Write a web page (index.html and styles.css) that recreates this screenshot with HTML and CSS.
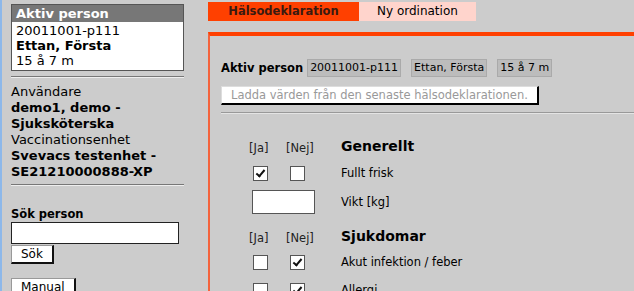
FILE: index.html
```html
<!DOCTYPE html>
<html lang="sv">
<head>
  <meta charset="UTF-8">
  <title>Hälsodeklaration</title>
  <link rel="stylesheet" href="styles.css">
</head>
<body>
  <div class="page">
    <!-- Sidebar -->
    <div class="sidebar">
      <div class="person-box">
        <div class="person-head">Aktiv person</div>
        <div class="person-body">
          <div>20011001-p111</div>
          <div class="bold">Ettan, Första</div>
          <div>15 å 7 m</div>
        </div>
      </div>
      <hr class="sep">
      <div class="user-info">
        <div>Användare</div>
        <div class="bold">demo1, demo -<br>Sjuksköterska</div>
        <div>Vaccinationsenhet</div>
        <div class="bold">Svevacs testenhet -<br>SE21210000888-XP</div>
      </div>
      <hr class="sep sep2">
      <div class="search">
        <div class="search-title">Sök person</div>
        <input type="text" class="search-input">
        <button class="btn">Sök</button>
      </div>
      <button class="btn manual">Manual</button>
    </div>

    <!-- Main -->
    <div class="main">
      <div class="tabs">
        <div class="tab active">Hälsodeklaration</div>
        <div class="tab">Ny ordination</div>
      </div>
      <div class="panel">
        <div class="active-row">
          <span class="bold">Aktiv person</span>
          <span class="field">20011001-p111</span>
          <span class="field">Ettan, Första</span>
          <span class="field">15 å 7 m</span>
        </div>
        <button class="load-btn">Ladda värden från den senaste hälsodeklarationen.</button>
        <hr class="panel-sep">

        <div class="qgrid">
          <div class="col-head">[Ja]</div>
          <div class="col-head">[Nej]</div>
          <div class="section">Generellt</div>

          <div class="cell"><span class="cb checked"></span></div>
          <div class="cell"><span class="cb"></span></div>
          <div class="label">Fullt frisk</div>

          <div class="cell wide"><span class="num-input"></span></div>
          <div class="label">Vikt [kg]</div>

          <div class="col-head">[Ja]</div>
          <div class="col-head">[Nej]</div>
          <div class="section">Sjukdomar</div>

          <div class="cell"><span class="cb"></span></div>
          <div class="cell"><span class="cb checked"></span></div>
          <div class="label">Akut infektion / feber</div>

          <div class="cell"><span class="cb"></span></div>
          <div class="cell"><span class="cb checked"></span></div>
          <div class="label">Allergi</div>
        </div>
      </div>
    </div>
  </div>
</body>
</html>
```
FILE: styles.css
```css
body {
  margin: 0;
  background-color: #cccccc;
  font-family: "DejaVu Sans", Verdana, sans-serif;
  font-size: 12px;
  color: #000;
  height: 291px;
  overflow: hidden;
}
.page {
  display: flex;
  border-left: 2px solid #8db8ea;
  height: 291px;
  overflow: hidden;
}
.bold {
  font-weight: bold;
}

/* Sidebar */
.sidebar {
  width: 173px;
  padding: 4px 0 0 9px;
  flex-shrink: 0;
}
.person-box {
  border: 1px solid #555;
  background: #fff;
}
.person-head {
  background: #777;
  color: #fff;
  font-weight: bold;
  font-size: 13px;
  padding: 0 4px;
  height: 17px;
  line-height: 17px;
}
.person-body {
  padding: 1px 4px 2px;
  line-height: 15px;
  font-size: 13px;
}
.sep {
  border: none;
  border-top: 1px solid #777;
  border-bottom: 1px solid #eee;
  margin: 5px 0 6px;
}
.sep2 {
  margin-top: 4px;
}
.user-info {
  line-height: 16px;
  font-size: 13px;
}
.search {
  margin-top: 20px;
}
.search-title {
  font-weight: bold;
  font-size: 11.5px;
  line-height: 16px;
}
.search-input {
  display: block;
  width: 168px;
  height: 22px;
  box-sizing: border-box;
  border: 1px solid #222;
  margin: 0;
  padding: 0;
}
.btn {
  display: block;
  background: #fff;
  border: 1px solid #999;
  border-right-color: #111;
  border-bottom-color: #111;
  border-width: 1px 2px 2px 1px;
  font-family: inherit;
  font-size: 12px;
  padding: 0 9px;
  height: 19px;
  margin: 1px 0 0;
}
.manual {
  margin-top: 14px;
}

/* Main */
.main {
  flex: 1;
  margin-left: 24px;
}
.tabs {
  display: flex;
  margin-top: 2px;
  height: 19px;
}
.tab {
  background: #ffd4cc;
  padding: 0 18px;
  line-height: 19px;
  font-size: 12px;
}
.tab.active {
  background: #ff4000;
  font-weight: bold;
  font-size: 11.5px;
  width: 151px;
  box-sizing: border-box;
  text-align: center;
  padding: 0;
  color: #3a1a10;
}
.panel {
  margin-top: 11px;
  border-top: 4px solid #ff4000;
  border-left: 2px solid #f4633c;
  padding: 23px 0 0 11px;
  height: 300px;
}
.active-row {
  display: flex;
  align-items: center;
  gap: 10px;
  height: 18px;
}
.active-row .bold {
  margin-right: -6px;
  font-size: 11.5px;
}
.field {
  background: #bcbcbc;
  border: 1px solid #aaa;
  padding: 0 2px;
  font-size: 11px;
  height: 16px;
  line-height: 16px;
}
.load-btn {
  display: block;
  margin-top: 9px;
  background: #fff;
  color: #999;
  border: 1px solid #ddd;
  border-right: 2px solid #000;
  border-bottom: 2px solid #000;
  font-family: inherit;
  font-size: 11.5px;
  height: 19px;
  padding: 0 9px;
}
.panel-sep {
  border: none;
  border-top: 1px solid #999;
  border-bottom: 1px solid #e4e4e4;
  margin: 7px 0 0;
}
.qgrid {
  display: grid;
  grid-template-columns: 37px 52px 1fr;
  grid-template-rows: 22px 30px 27px 33px 28px 28px;
  margin: 22px 0 0 31px;
  align-items: center;
}
.col-head {
  font-size: 11.5px;
  color: #222;
  height: 20px;
  line-height: 20px;
  align-self: end;
  margin-left: -3px;
}
.section {
  font-weight: bold;
  font-size: 14px;
  height: 20px;
  line-height: 16px;
  align-self: end;
}
.cell {
  display: flex;
  align-items: center;
}
.cell.wide {
  grid-column: 1 / 3;
}
.label {
  font-size: 11.5px;
}
.cb {
  width: 13px;
  height: 13px;
  margin-left: 1px;
  background: #fff;
  border: 1px solid #555;
  position: relative;
}
.cb.checked::after {
  content: "";
  position: absolute;
  left: 4px;
  top: 1px;
  width: 3px;
  height: 7px;
  border: solid #111;
  border-width: 0 2px 2px 0;
  transform: rotate(40deg);
}
.num-input {
  display: block;
  width: 61px;
  height: 22px;
  background: #fff;
  border: 1px solid #555;
}
```
